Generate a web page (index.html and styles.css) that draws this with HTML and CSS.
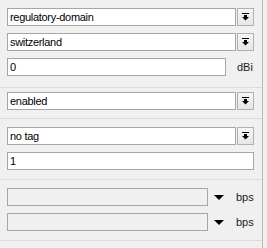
FILE: index.html
```
<!DOCTYPE html>
<html lang="en">
<head>
    <meta charset="UTF-8">
    <title>Wireless settings</title>
    <link rel="stylesheet" href="styles.css">
</head>
<body>
    <div class="panel">

        <!-- Country / antenna -->
        <div class="group first">
            <div class="row">
                <div class="field">regulatory-domain</div>
                <div class="drop">
                    <svg width="7" height="8" viewBox="0 0 7 8"><rect x="0" y="0" width="7" height="1"/><rect x="2" y="2" width="3" height="2"/><path d="M0 4 H7 L3.5 7.5 Z"/></svg>
                </div>
            </div>
            <div class="row">
                <div class="field">switzerland</div>
                <div class="drop">
                    <svg width="7" height="8" viewBox="0 0 7 8"><rect x="0" y="0" width="7" height="1"/><rect x="2" y="2" width="3" height="2"/><path d="M0 4 H7 L3.5 7.5 Z"/></svg>
                </div>
            </div>
            <div class="row">
                <div class="field short">0</div>
                <span class="unit">dBi</span>
            </div>
        </div>

        <!-- Mode -->
        <div class="group second">
            <div class="row">
                <div class="field">enabled</div>
                <div class="drop">
                    <svg width="7" height="8" viewBox="0 0 7 8"><rect x="0" y="0" width="7" height="1"/><rect x="2" y="2" width="3" height="2"/><path d="M0 4 H7 L3.5 7.5 Z"/></svg>
                </div>
            </div>
        </div>

        <!-- VLAN -->
        <div class="group">
            <div class="row">
                <div class="field">no tag</div>
                <div class="drop">
                    <svg width="7" height="8" viewBox="0 0 7 8"><rect x="0" y="0" width="7" height="1"/><rect x="2" y="2" width="3" height="2"/><path d="M0 4 H7 L3.5 7.5 Z"/></svg>
                </div>
            </div>
            <div class="row">
                <div class="field">1</div>
            </div>
        </div>

        <!-- Rate limits -->
        <div class="group">
            <div class="row">
                <div class="field disabled"></div>
                <span class="caret"></span>
                <span class="unit">bps</span>
            </div>
            <div class="row">
                <div class="field disabled"></div>
                <span class="caret"></span>
                <span class="unit">bps</span>
            </div>
        </div>

    </div>
</body>
</html>
```

FILE: styles.css
```
/* Base styling */
body, html {
    margin: 0;
    padding: 0;
    background: #f0f0f0;
    font-family: 'Liberation Sans', Arial, sans-serif;
    font-size: 11px;
    color: #000;
}

/* Panel with right edge line */
.panel {
    width: 262px;
    height: 248px;
    border-right: 1px solid #b9b9b9;
    box-sizing: content-box;
}

/* Groups separated by thin lines */
.group {
    display: flex;
    flex-direction: column;
    gap: 7px;
    padding: 8px 8px 9px 7px;
    border-bottom: 1px solid #dadada;
}

.group.first {
    padding-bottom: 11px;
}

.group.second {
    padding-top: 4px;
    padding-bottom: 8px;
}

.row {
    display: flex;
    align-items: center;
    height: 18px;
    width: 247px;
}

/* Text fields */
.field {
    flex: 1;
    height: 18px;
    box-sizing: border-box;
    border: 1px solid #a6a6a6;
    background: #fff;
    padding: 0 1px 0 2px;
    line-height: 16px;
    letter-spacing: -0.3px;
    white-space: nowrap;
    overflow: hidden;
}

.field.short {
    flex: none;
    width: 219px;
}

.field.disabled {
    flex: none;
    width: 201px;
    background: #f0f0f0;
}

/* Dropdown button */
.drop {
    width: 17px;
    height: 18px;
    box-sizing: border-box;
    margin-left: 1px;
    border: 1px solid #b0b0b0;
    background: linear-gradient(#f6f6f6, #e6e6e6);
    display: flex;
    justify-content: center;
    align-items: center;
}

.drop svg {
    fill: #000;
}

/* Units */
.unit {
    margin-left: 11px;
    color: #1a1a1a;
}

.caret {
    width: 0;
    height: 0;
    margin-left: 6px;
    border-left: 5px solid transparent;
    border-right: 5px solid transparent;
    border-top: 5px solid #000;
}

.caret + .unit {
    margin-left: 12px;
}
```
